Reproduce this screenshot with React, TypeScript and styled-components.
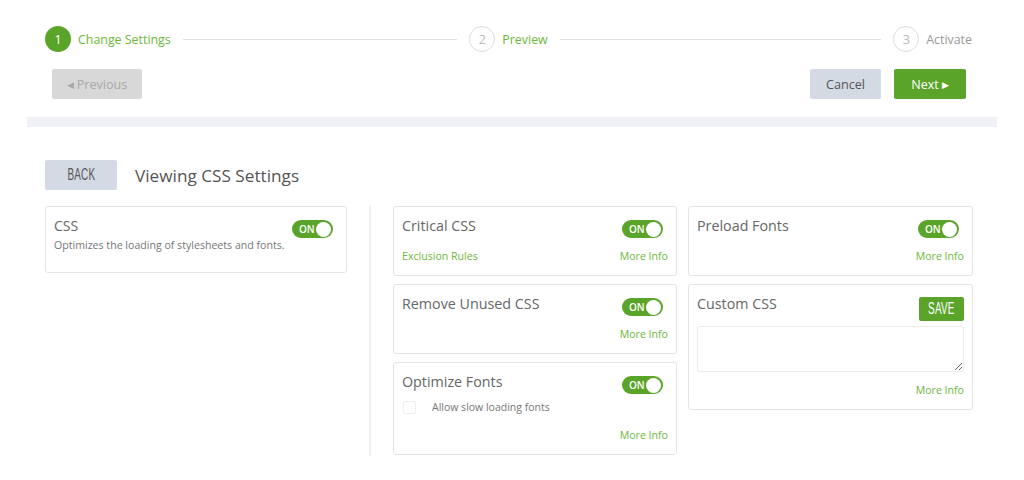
import React from "react";
import styled, { createGlobalStyle } from "styled-components";

const Global = createGlobalStyle`
  html, body { margin: 0; padding: 0; background: #fff; }
  body { font-family: "Open Sans", "Liberation Sans", sans-serif; color: #555; }
  * { box-sizing: border-box; }
`;

const GREEN = "#5ba42a";
const LINK = "#6cb83c";

const Page = styled.div`
  width: 1024px;
  padding: 0 27px;
`;

const Top = styled.div`
  padding: 26px 25px 0 18px;
`;

const Stepper = styled.div`
  display: flex;
  align-items: center;
  height: 26px;
`;

const Step = styled.div`
  display: flex;
  align-items: center;
  gap: 7px;
`;

const Circle = styled.div<{ $active?: boolean }>`
  width: 26px;
  height: 26px;
  border-radius: 50%;
  display: flex;
  align-items: center;
  justify-content: center;
  font-size: 12.5px;
  background: ${(p) => (p.$active ? GREEN : "#fff")};
  color: ${(p) => (p.$active ? "#fff" : "#bbb")};
  border: ${(p) => (p.$active ? "none" : "1.5px solid #ddd")};
`;

const StepLabel = styled.span<{ $green?: boolean }>`
  font-size: 12.4px;
  color: ${(p) => (p.$green ? LINK : "#999")};
`;

const Connector = styled.div<{ $grow: number }>`
  flex: ${(p) => p.$grow};
  height: 1px;
  background: #e2e2e2;
  margin: 0 12px;
`;

const ButtonRow = styled.div`
  display: flex;
  align-items: center;
  gap: 13px;
  margin-top: 17px;
  padding: 0 6px 0 7px;
`;

const NavButton = styled.button<{ $kind: "disabled" | "cancel" | "next" }>`
  height: 30px;
  border: none;
  border-radius: 2px;
  font-family: "Open Sans", sans-serif;
  font-size: 12.6px;
  display: flex;
  align-items: center;
  justify-content: center;
  gap: 3px;
  padding: 0;
  width: ${(p) => (p.$kind === "disabled" ? 90 : p.$kind === "cancel" ? 71 : 72)}px;
  background: ${(p) =>
    p.$kind === "disabled" ? "#d8d8d8" : p.$kind === "cancel" ? "#d3dae4" : GREEN};
  color: ${(p) => (p.$kind === "disabled" ? "#a9a9a9" : p.$kind === "cancel" ? "#555" : "#fff")};
`;

const Spacer = styled.div`
  flex: 1;
`;

const Caret = styled.span`
  font-size: 9px;
  line-height: 1;
`;

const Band = styled.div`
  margin-top: 18px;
  height: 10px;
  background: #eff1f6;
`;

const Content = styled.div`
  padding: 33px 0 0 18px;
`;

const Header = styled.div`
  display: flex;
  align-items: center;
  gap: 18px;
`;

const CondensedButton = styled.button<{ $green?: boolean }>`
  border: none;
  border-radius: 2px;
  padding: 0;
  display: flex;
  align-items: center;
  justify-content: center;
  background: ${(p) => (p.$green ? GREEN : "#d3dae4")};
  color: ${(p) => (p.$green ? "#fff" : "#555")};
`;

const BackButton = styled(CondensedButton)`
  width: 72px;
  height: 30px;
`;

const CondensedText = styled.span`
  display: inline-block;
  font-family: "Liberation Sans", "Open Sans", sans-serif;
  font-size: 16px;
  transform: scaleX(0.62);
  letter-spacing: 0.3px;
`;

const Title = styled.h1`
  margin: 0;
  font-weight: 400;
  font-size: 17.2px;
  color: #555;
`;

const Columns = styled.div`
  display: flex;
  margin-top: 16px;
`;

const Col = styled.div<{ $w: number }>`
  width: ${(p) => p.$w}px;
  display: flex;
  flex-direction: column;
  gap: 8px;
`;

const ColGap = styled.div`
  width: 11px;
`;

const Divider = styled.div`
  width: 2px;
  background: #efefef;
  margin: 0 22px;
  height: 250px;
`;

const Card = styled.div<{ $h: number }>`
  height: ${(p) => p.$h}px;
  border: 1px solid #e4e4e4;
  border-radius: 3px;
  padding: 9px 8px 0 8px;
  display: flex;
  flex-direction: column;
`;

const CardHead = styled.div`
  display: flex;
  justify-content: space-between;
  align-items: flex-start;
  padding-right: 5px;
`;

const CardTitle = styled.div<{ $small?: boolean }>`
  font-size: ${(p) => (p.$small ? 14 : 14.3)}px;
  color: #666;
  line-height: 19px;
`;

const Desc = styled.div`
  font-size: 10.6px;
  color: #777;
`;

const ToggleWrap = styled.div`
  width: 41px;
  height: 18px;
  border-radius: 9px;
  background: ${GREEN};
  display: flex;
  align-items: center;
  justify-content: space-between;
  padding: 0 2px 0 7px;
  margin-top: 4px;
`;

const ToggleText = styled.span`
  color: #fff;
  font-size: 10px;
  font-weight: 600;
`;

const Knob = styled.span`
  width: 15px;
  height: 15px;
  border-radius: 50%;
  background: #fff;
`;

const Footer = styled.div<{ $split?: boolean }>`
  margin-top: auto;
  margin-bottom: 12px;
  display: flex;
  justify-content: ${(p) => (p.$split ? "space-between" : "flex-end")};
`;

const Link = styled.a`
  font-size: 10.6px;
  color: ${LINK};
  text-decoration: none;
`;

const CheckRow = styled.div`
  display: flex;
  align-items: center;
  margin-top: 6px;
`;

const Check = styled.span`
  width: 13px;
  height: 13px;
  border: 1px solid #eee;
  border-radius: 2px;
  margin-left: 1px;
`;

const CheckLabel = styled.span`
  font-size: 10.5px;
  color: #777;
  margin-left: 16px;
`;

const SaveButton = styled(CondensedButton)`
  width: 45px;
  height: 24px;
  margin-top: 3px;
  margin-right: -5px;
`;

const TextArea = styled.textarea`
  margin-top: 5px;
  width: 267px;
  height: 46px;
  border: 1px solid #ececec;
  border-radius: 2px;
  resize: vertical;
  font-family: inherit;
`;

const Toggle = () => (
  <ToggleWrap>
    <ToggleText>ON</ToggleText>
    <Knob />
  </ToggleWrap>
);

export default function App() {
  return (
    <Page>
      <Global />
      <Top>
        <Stepper>
          <Step>
            <Circle $active>1</Circle>
            <StepLabel $green>Change Settings</StepLabel>
          </Step>
          <Connector $grow={275} />
          <Step>
            <Circle>2</Circle>
            <StepLabel $green>Preview</StepLabel>
          </Step>
          <Connector $grow={322} />
          <Step>
            <Circle>3</Circle>
            <StepLabel>Activate</StepLabel>
          </Step>
        </Stepper>
        <ButtonRow>
          <NavButton $kind="disabled">
            <Caret>◀</Caret>Previous
          </NavButton>
          <Spacer />
          <NavButton $kind="cancel">Cancel</NavButton>
          <NavButton $kind="next">
            Next<Caret>▶</Caret>
          </NavButton>
        </ButtonRow>
      </Top>
      <Band />
      <Content>
        <Header>
          <BackButton>
            <CondensedText>BACK</CondensedText>
          </BackButton>
          <Title>Viewing CSS Settings</Title>
        </Header>
        <Columns>
          <Col $w={302}>
            <Card $h={67}>
              <CardHead>
                <CardTitle $small>CSS</CardTitle>
                <Toggle />
              </CardHead>
              <Desc>Optimizes the loading of stylesheets and fonts.</Desc>
            </Card>
          </Col>
          <Divider />
          <Col $w={284}>
            <Card $h={70}>
              <CardHead>
                <CardTitle>Critical CSS</CardTitle>
                <Toggle />
              </CardHead>
              <Footer $split>
                <Link>Exclusion Rules</Link>
                <Link>More Info</Link>
              </Footer>
            </Card>
            <Card $h={70}>
              <CardHead>
                <CardTitle>Remove Unused CSS</CardTitle>
                <Toggle />
              </CardHead>
              <Footer>
                <Link>More Info</Link>
              </Footer>
            </Card>
            <Card $h={93}>
              <CardHead>
                <CardTitle>Optimize Fonts</CardTitle>
                <Toggle />
              </CardHead>
              <CheckRow>
                <Check />
                <CheckLabel>Allow slow loading fonts</CheckLabel>
              </CheckRow>
              <Footer>
                <Link>More Info</Link>
              </Footer>
            </Card>
          </Col>
          <ColGap />
          <Col $w={285}>
            <Card $h={70}>
              <CardHead>
                <CardTitle>Preload Fonts</CardTitle>
                <Toggle />
              </CardHead>
              <Footer>
                <Link>More Info</Link>
              </Footer>
            </Card>
            <Card $h={126}>
              <CardHead>
                <CardTitle>Custom CSS</CardTitle>
                <SaveButton $green>
                  <CondensedText>SAVE</CondensedText>
                </SaveButton>
              </CardHead>
              <TextArea />
              <Footer>
                <Link>More Info</Link>
              </Footer>
            </Card>
          </Col>
        </Columns>
      </Content>
    </Page>
  );
}
